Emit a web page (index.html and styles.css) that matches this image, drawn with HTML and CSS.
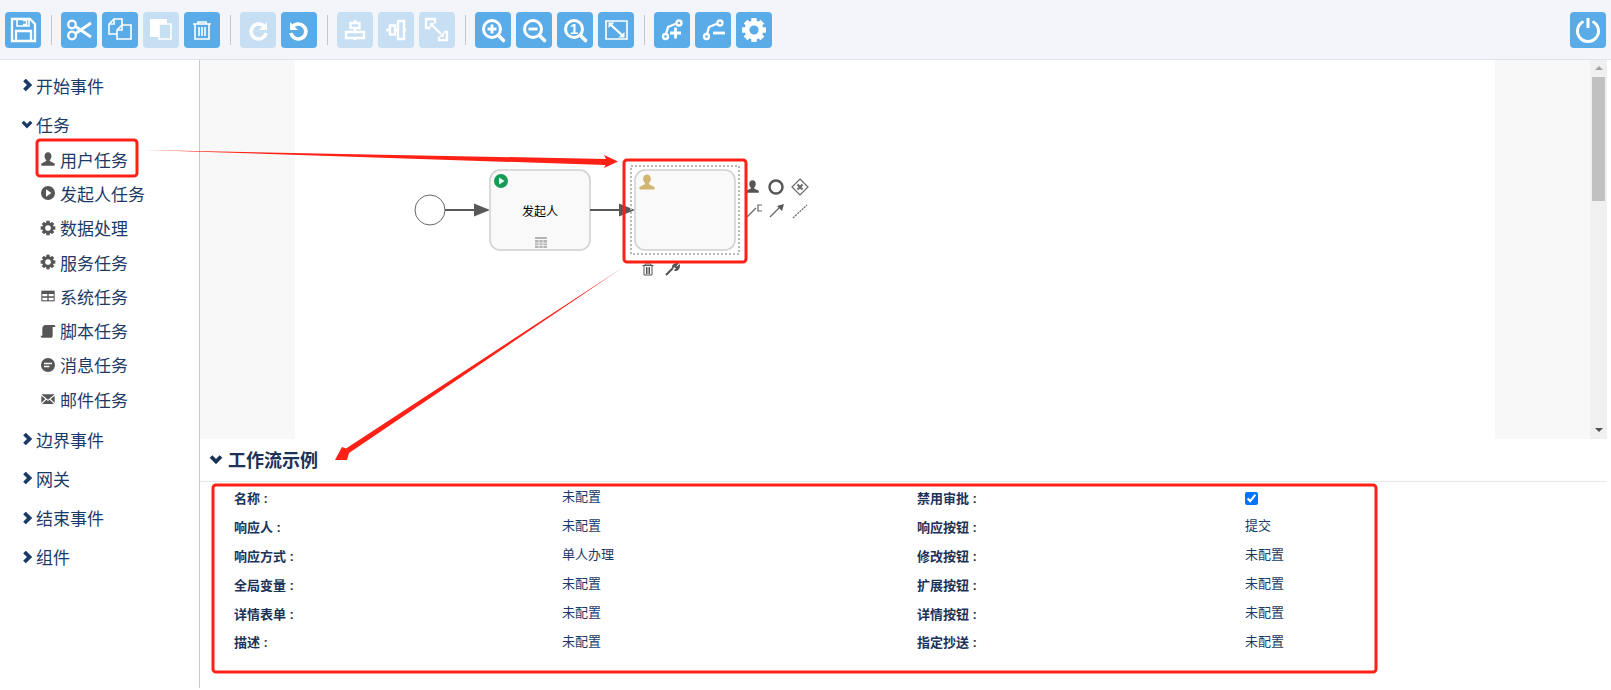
FILE: index.html
```html
<!DOCTYPE html>
<html lang="zh-CN">
<head>
  <meta charset="UTF-8">
  <title>工作流示例</title>
  <link rel="stylesheet" href="styles.css">
</head>
<body>
  <svg class="defs" width="0" height="0">
    <symbol id="i-user" viewBox="0 0 24 24"><path d="M12 2c-3.200 0-5.200 2.600-5.200 6 0 2.400 1 4.200 2.500 5.400v1.600L2 18.600V22h20v-3.400L14.700 15v-1.600C16.200 12.200 17.200 10.400 17.200 8c0-3.400-2-6-5.200-6z"/></symbol>
    <symbol id="i-gear" viewBox="0 0 24 24">
      <circle cx="12" cy="12" r="6.500" fill="none" stroke="currentColor" stroke-width="4.500"/>
      <g>
        <rect x="9.500" y="1" width="5" height="5"/>
        <rect x="9.500" y="18" width="5" height="5"/>
        <rect x="1" y="9.500" width="5" height="5"/>
        <rect x="18" y="9.500" width="5" height="5"/>
        <rect x="9.500" y="1" width="5" height="5" transform="rotate(45 12 12)"/>
        <rect x="9.500" y="18" width="5" height="5" transform="rotate(45 12 12)"/>
        <rect x="1" y="9.500" width="5" height="5" transform="rotate(45 12 12)"/>
        <rect x="18" y="9.500" width="5" height="5" transform="rotate(45 12 12)"/>
      </g>
    </symbol>
    <symbol id="i-right" viewBox="0 0 10 14"><path d="M2.500 2l5 5-5 5" fill="none" stroke="currentColor" stroke-width="3.800"/></symbol>
    <symbol id="i-down" viewBox="0 0 14 10"><path d="M2 2.500l5 5 5-5" fill="none" stroke="currentColor" stroke-width="3.800"/></symbol>
  </svg>

  <div class="toolbar">
    <button class="tool">
      <svg viewBox="0 0 36 36"><path class="mid" d="M7 7h18l5 5v17H7z"/><path d="M12 7v7h12V7M18 8.500h3.500v4H18"/><path class="mid" d="M11 29V19h15v10"/></svg>
    </button>
    <span class="sep"></span>
    <button class="tool">
      <svg viewBox="0 0 36 36"><circle class="mid" cx="11" cy="12.500" r="3.800"/><circle class="mid" cx="11" cy="23.500" r="3.800"/><path class="thick" d="M14.500 14.500L30 25M14.500 21.500L30 11"/></svg>
    </button>
    <button class="tool">
      <svg viewBox="0 0 36 36"><path d="M12 7h8v15H7V12zM12 7v5H7"/><path class="back" d="M20 13h9v14H15V18z"/><path d="M20 13v5h-5"/></svg>
    </button>
    <button class="tool off">
      <svg viewBox="0 0 36 36"><path class="solid" d="M7 7h17v18H7z"/><path class="back" d="M16 12h12v15H16z"/></svg>
    </button>
    <button class="tool">
      <svg viewBox="0 0 36 36"><path d="M9 12h18M14 12V10h8v2M11 12v15h14V12M15 15v9M18 15v9M21 15v9"/></svg>
    </button>
    <span class="sep"></span>
    <button class="tool off">
      <svg viewBox="0 0 36 36"><path class="arc" d="M25 15.500a7.500 7.500 0 1 0 1 5.500"/><path class="solid" d="M27 10v8h-8z"/></svg>
    </button>
    <button class="tool">
      <svg viewBox="0 0 36 36"><path class="arc" d="M11 15.500a7.500 7.500 0 1 1-1 5.500"/><path class="solid" d="M9 10v8h8z"/></svg>
    </button>
    <span class="sep"></span>
    <button class="tool off">
      <svg viewBox="0 0 36 36"><path class="thick" d="M18 8v20"/><path class="back mid" d="M13.500 11h9v5h-9zM9 20h18v6H9z"/></svg>
    </button>
    <button class="tool off">
      <svg viewBox="0 0 36 36"><path class="thick" d="M8 18h20"/><path class="back mid" d="M12 13.500h5v9h-5zM20 9h6v18h-6z"/></svg>
    </button>
    <button class="tool off">
      <svg viewBox="0 0 36 36"><path class="mid" d="M16 11V7H7v9h4M20 25v3h8v-8h-3"/><path class="mid" d="M13 13l9 9"/><path class="solid" d="M11 11h5l-5 5zM25 25h-5l5-5z"/></svg>
    </button>
    <span class="sep"></span>
    <button class="tool">
      <svg viewBox="0 0 36 36"><circle class="lens" cx="17" cy="17" r="8.500"/><path class="handle" d="M23.500 23.500L28.500 28.500"/><path class="thick" d="M12.500 17h9M17 12.500v9"/></svg>
    </button>
    <button class="tool">
      <svg viewBox="0 0 36 36"><circle class="lens" cx="17" cy="17" r="8.500"/><path class="handle" d="M23.500 23.500L28.500 28.500"/><path class="thick" d="M12.500 17h9"/></svg>
    </button>
    <button class="tool">
      <svg viewBox="0 0 36 36"><circle class="lens" cx="17" cy="17" r="8.500"/><path class="handle" d="M23.500 23.500L28.500 28.500"/><text class="one" x="17" y="22">1</text></svg>
    </button>
    <button class="tool">
      <svg viewBox="0 0 36 36"><path d="M8 9h21v18H8z"/><path class="mid" d="M12 12l13 12"/><path class="solid" d="M10.500 10.500h6l-6 5.500zM26.500 25.500h-6l6-5.500z"/></svg>
    </button>
    <span class="sep"></span>
    <button class="tool">
      <svg viewBox="0 0 36 36"><circle class="mid" cx="11.500" cy="24.500" r="2.500"/><circle class="mid" cx="25" cy="11" r="2.500"/><path class="mid" d="M12 22l2-7 8.500-3.500"/><path class="thick" d="M16 21h11M21.500 15.500v11"/></svg>
    </button>
    <button class="tool">
      <svg viewBox="0 0 36 36"><circle class="mid" cx="11.500" cy="24.500" r="2.500"/><circle class="mid" cx="25" cy="11" r="2.500"/><path class="mid" d="M12 22l2-7 8.500-3.500"/><path class="thick" d="M18 21h12"/></svg>
    </button>
    <button class="tool gear">
      <svg viewBox="0 0 24 24"><use href="#i-gear"/></svg>
    </button>
    <button class="tool power">
      <svg viewBox="0 0 36 36"><path class="thick" d="M13.500 9.500a10.500 10.500 0 1 0 9 0"/><path class="thick" d="M18 6v10"/></svg>
    </button>
  </div>

  <div class="main">
    <div class="sidebar">
      <div class="group"><svg class="chev"><use href="#i-right"/></svg>开始事件</div>
      <div class="group"><svg class="chev open"><use href="#i-down"/></svg>任务</div>
      <ul class="children">
        <li><svg class="ico"><use href="#i-user"/></svg>用户任务</li>
        <li><svg class="ico" viewBox="0 0 24 24"><circle cx="12" cy="12" r="10.500"/><path class="cut" d="M9 6.500l8 5.500-8 5.500z"/></svg>发起人任务</li>
        <li><svg class="ico"><use href="#i-gear"/></svg>数据处理</li>
        <li><svg class="ico"><use href="#i-gear"/></svg>服务任务</li>
        <li><svg class="ico" viewBox="0 0 24 24"><path d="M2 4h20v16H2z"/><path class="cut" d="M3.500 9h7.500v3.500H3.500zM13 9h7.500v3.500H13zM3.500 14.500h7.500v4H3.500zM13 14.500h7.500v4H13z"/></svg>系统任务</li>
        <li><svg class="ico" viewBox="0 0 24 24"><path d="M8 3h13c1 0 2 1 2 3h-4v13c0 2-1.500 3-3 3H4c-2 0-3-1-3-3h2.500V8C3.500 5 6 3 8 3z"/></svg>脚本任务</li>
        <li><svg class="ico" viewBox="0 0 24 24"><circle cx="12" cy="12" r="10.500"/><path class="cut" d="M6 8.500h12v2.500H6zM6 13h8v2.500H6z"/></svg>消息任务</li>
        <li><svg class="ico" viewBox="0 0 24 24"><path d="M2 5h20L12 13zM2 7l6 5-6 6zM22 7l-6 5 6 6zM3 19.500l6.500-6.500 2.500 2 2.500-2 6.500 6.500z"/></svg>邮件任务</li>
      </ul>
      <div class="group"><svg class="chev"><use href="#i-right"/></svg>边界事件</div>
      <div class="group"><svg class="chev"><use href="#i-right"/></svg>网关</div>
      <div class="group"><svg class="chev"><use href="#i-right"/></svg>结束事件</div>
      <div class="group"><svg class="chev"><use href="#i-right"/></svg>组件</div>
    </div>

    <div class="work">
      <div class="canvas">
        <div class="gutter"></div>
        <div class="paper"></div>
        <div class="gutter"></div>
        <div class="scrollbar">
          <span class="up"></span>
          <span class="thumb"></span>
          <span class="down"></span>
        </div>

        <svg class="diagram" viewBox="200 60 1390 379" width="1390" height="379">
          <circle class="start" cx="430" cy="210" r="15"/>
          <path class="flow" d="M445 210h30"/>
          <path class="head" d="M474 203.500l16 6.500-16 6.500z"/>
          <rect class="task" x="490" y="170" width="100" height="80" rx="10"/>
          <circle class="badge" cx="501" cy="181" r="7"/>
          <path class="badge-play" d="M499 177.500l5.500 3.500-5.500 3.500z"/>
          <text class="task-name" x="540" y="216">发起人</text>
          <path class="mini" d="M535 237h12v2h-12zM535 240h12v8h-12z"/>
          <path class="mini-cut" d="M535 243h12M535 245.500h12M539 240v8M543 240v8"/>

          <path class="flow" d="M590 210h30"/>
          <path class="head" d="M619 203.500l16 6.500-16 6.500z"/>
          <rect class="task" x="635" y="170" width="100" height="80" rx="10"/>
          <use class="gold" href="#i-user" x="638" y="173" width="18" height="18"/>
          <rect class="selection" x="631" y="166" width="108" height="88"/>

          <g class="trash">
            <path d="M642.500 265.500h11M645 265.500v-1.500h6v1.500M644 265.500v9.500h8v-9.500M646.500 267v7M648 267v7M649.500 267v7"/>
          </g>
          <path class="wrench" d="M666 275l7-7M673 268c-.5-2 1-4 4-4l-2 2.500 1.500 1.500 2.500-2c0 3-2 4.500-4.500 4"/>

          <use class="pad" href="#i-user" x="745" y="179" width="15" height="15"/>
          <circle class="pad-ring" cx="776" cy="187" r="6.500"/>
          <path class="pad-line" d="M800 179l8 8-8 8-8-8z"/>
          <path class="pad-x" d="M797.500 184.500l5 5M802.500 184.500l-5 5"/>
          <path class="pad-line" d="M747 217l9-9M762 205h-4v6h4"/>
          <path class="pad-line" d="M770 217l11-11"/>
          <path class="pad-arrow" d="M784 204l-7 2 5 5z"/>
          <path class="pad-dots" d="M793 218l14-13"/>
        </svg>
      </div>

      <div class="details">
        <h3 class="title"><svg class="chev-title"><use href="#i-down"/></svg>工作流示例</h3>
        <div class="props">
          <div class="key">名称 :</div><div class="val">未配置</div>
          <div class="key">禁用审批 :</div><div class="val"><input type="checkbox" checked></div>
          <div class="key">响应人 :</div><div class="val">未配置</div>
          <div class="key">响应按钮 :</div><div class="val">提交</div>
          <div class="key">响应方式 :</div><div class="val">单人办理</div>
          <div class="key">修改按钮 :</div><div class="val">未配置</div>
          <div class="key">全局变量 :</div><div class="val">未配置</div>
          <div class="key">扩展按钮 :</div><div class="val">未配置</div>
          <div class="key">详情表单 :</div><div class="val">未配置</div>
          <div class="key">详情按钮 :</div><div class="val">未配置</div>
          <div class="key">描述 :</div><div class="val">未配置</div>
          <div class="key">指定抄送 :</div><div class="val">未配置</div>
        </div>
      </div>
    </div>
  </div>

  <!-- red marks drawn over the screenshot -->
  <svg class="marks" viewBox="0 0 1611 690" width="1611" height="690">
    <rect x="37" y="140" width="100" height="36" rx="3"/>
    <rect x="624" y="160" width="122" height="102" rx="3"/>
    <rect x="213" y="485" width="1163" height="187" rx="3"/>
    <path class="arrow" d="M145 150L606 159L604 155L618 161.500L604 168L605.500 165z"/>
    <path class="arrow" d="M622 268L346 448.500L342 447L335 460L347 460L349 453z"/>
  </svg>
</body>
</html>
```

FILE: styles.css
```css
* {
  box-sizing: border-box;
}
html, body {
  margin: 0;
  height: 690px;
  overflow: hidden;
}
body {
  position: relative;
  font-family: "Liberation Sans", "Noto Sans CJK SC", sans-serif;
  color: #1b3a68;
  background: #fff;
}
.defs {
  position: absolute;
}

/* toolbar */
.toolbar {
  display: flex;
  align-items: center;
  gap: 5px;
  height: 60px;
  padding: 0 5px;
  background: #f3f5fa;
  border-bottom: 1px solid #e1e4ec;
}
.sep {
  width: 1px;
  height: 30px;
  margin: 0 4px 0 5px;
  background: #c3c6cb;
}
.tool {
  width: 36px;
  height: 36px;
  padding: 0;
  border: 0;
  border-radius: 4px;
  background: #5aace8;
  color: #fff;
}
.tool.off {
  background: #c7dff3;
}
.tool.power {
  margin-left: auto;
}
.tool svg {
  display: block;
  width: 36px;
  height: 36px;
  fill: none;
  stroke: #fff;
  stroke-width: 1.6;
}
.tool .mid {
  stroke-width: 2.3;
}
.tool .thick {
  stroke-width: 2.8;
}
.tool .arc {
  stroke-width: 3.6;
}
.tool .lens {
  stroke-width: 3;
}
.tool .handle {
  stroke-width: 3.6;
  stroke-linecap: round;
}
.tool .solid {
  fill: #fff;
  stroke: none;
}
.tool .back {
  fill: #5aace8;
}
.tool.off .back {
  fill: #c7dff3;
}
.tool .one {
  fill: #fff;
  stroke: none;
  font-size: 15px;
  font-weight: bold;
  text-anchor: middle;
}
.tool.gear svg {
  width: 26px;
  height: 26px;
  margin: 5px;
  fill: #fff;
  stroke: none;
}
.tool.power .thick {
  stroke-width: 3;
}

/* left palette */
.main {
  display: flex;
  height: 628px;
}
.sidebar {
  flex: none;
  width: 200px;
  padding-top: 5.4px;
  border-right: 1px solid #c9c9c9;
  font-size: 17px;
}
.group {
  display: flex;
  align-items: center;
  height: 39.3px;
  padding-left: 22px;
}
.chev {
  flex: none;
  width: 10px;
  height: 14px;
  margin-right: 4px;
}
.chev.open {
  width: 12px;
  height: 10px;
  margin: 0 3px 0 -1px;
}
.children {
  list-style: none;
  margin: -2px 0 3px;
  padding: 0;
}
.children li {
  display: flex;
  align-items: center;
  height: 34.3px;
  padding-left: 40px;
}
.ico {
  flex: none;
  width: 16px;
  height: 16px;
  margin-right: 4px;
  fill: #565656;
  color: #565656;
}
.ico .cut {
  fill: #fff;
}

/* canvas */
.work {
  flex: none;
  width: 1407px;
}
.canvas {
  position: relative;
  display: flex;
  height: 379px;
}
.gutter {
  flex: none;
  width: 95px;
  background: #f8f8f8;
}
.paper {
  flex: none;
  width: 1200px;
  background: #fff;
}
.scrollbar {
  flex: none;
  display: flex;
  flex-direction: column;
  align-items: center;
  width: 17px;
  background: #f0f0f0;
}
.up {
  margin-top: 6px;
  border: 4px solid transparent;
  border-top: 0;
  border-bottom: 4px solid #a3a3a3;
}
.thumb {
  width: 13px;
  height: 124px;
  margin-top: 7px;
  background: #c1c1c1;
}
.down {
  margin-top: auto;
  margin-bottom: 7px;
  border: 4px solid transparent;
  border-bottom: 0;
  border-top: 4px solid #505050;
}
.diagram {
  position: absolute;
  left: 0;
  top: 0;
}
.start {
  fill: #fff;
  stroke: #666;
  stroke-width: 1;
}
.flow {
  fill: none;
  stroke: #585858;
  stroke-width: 2;
}
.head {
  fill: #585858;
}
.task {
  fill: #f9f9f9;
  stroke: #cfcfcf;
  stroke-width: 1.5;
}
.badge {
  fill: #169a54;
}
.badge-play {
  fill: #fff;
}
.task-name {
  font-size: 12px;
  fill: #000;
  text-anchor: middle;
}
.mini {
  fill: #b4b4b4;
}
.mini-cut {
  stroke: #fff;
  stroke-width: .7;
  fill: none;
}
.gold {
  fill: #d1b574;
}
.selection {
  fill: none;
  stroke: #b8b8b8;
  stroke-width: 2;
  stroke-dasharray: 2 2;
}
.trash path {
  fill: none;
  stroke: #555;
  stroke-width: 1;
}
.wrench {
  fill: none;
  stroke: #555;
  stroke-width: 2;
}
.pad {
  fill: #555;
}
.pad-ring {
  fill: none;
  stroke: #585858;
  stroke-width: 2.5;
}
.pad-line {
  fill: none;
  stroke: #666;
  stroke-width: 1.2;
}
.pad-x {
  fill: none;
  stroke: #666;
  stroke-width: 2;
}
.pad-arrow {
  fill: #555;
}
.pad-dots {
  fill: none;
  stroke: #666;
  stroke-width: 1.2;
  stroke-dasharray: 2 1;
}

/* detail panel */
.title {
  display: flex;
  align-items: center;
  height: 43px;
  margin: 0;
  padding: 0 0 2px 9px;
  border-bottom: 1px solid #e6e6ee;
  font-size: 18px;
  color: #1b3358;
}
.chev-title {
  width: 14px;
  height: 10px;
  margin-right: 5px;
}
.props {
  display: grid;
  grid-template-columns: 328px 355px 328px 1fr;
  grid-auto-rows: 28.9px;
  padding: 1px 0 0 34px;
  font-size: 13px;
}
.key {
  align-self: center;
  font-weight: bold;
  color: #1b3358;
}
.val {
  align-self: center;
  padding-bottom: 3px;
}
.val input {
  display: block;
  width: 13px;
  height: 13px;
  margin: 5px 0 0;
}

/* annotations */
.marks {
  position: absolute;
  left: 0;
  top: 0;
  pointer-events: none;
}
.marks rect {
  fill: none;
  stroke: #ff2016;
  stroke-width: 3;
}
.marks .arrow {
  fill: #ff2016;
}
```
